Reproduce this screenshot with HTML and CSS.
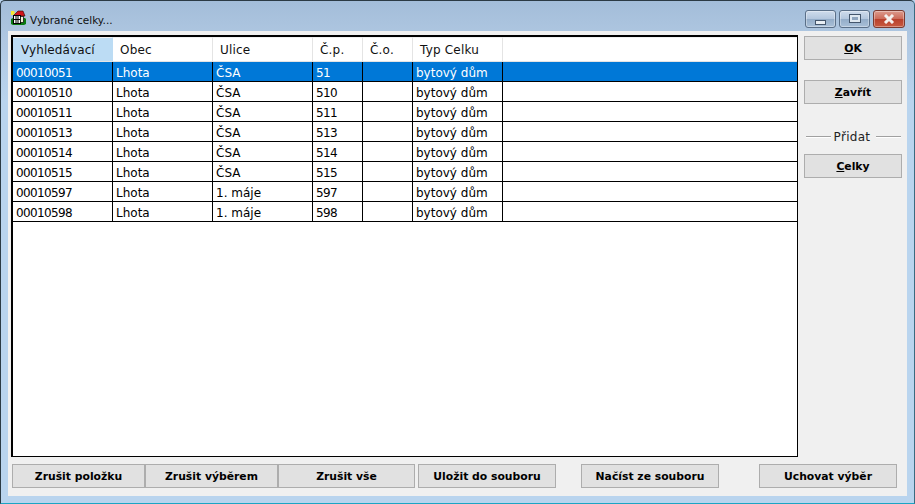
FILE: index.html
```html
<!DOCTYPE html>
<html lang="cs">
<head>
<meta charset="utf-8">
<title>Vybrané celky...</title>
<link rel="stylesheet" href="styles.css">
</head>
<body>
<div class="window">
  <div class="titlebar">
    <svg class="appicon" width="16" height="16" viewBox="0 0 16 16">
      <path d="M1 9l2-1h12l1 1v5l-2 1H3l-2-1z" fill="#0a7a12"/>
      <path d="M1 1h3l1 2-2 2H1z" fill="#f5e830"/>
      <path d="M3 6l5-5h5l2 5z" fill="#d0141c" stroke="#300" stroke-width=".6"/>
      <rect x="3.5" y="5.5" width="7" height="8" fill="#fff" stroke="#000"/>
      <path d="M6 6v7M8 6v7M4 9.5h6" stroke="#000"/>
      <rect x="10.5" y="6.5" width="3" height="6" fill="#f6eed8" stroke="#000" stroke-width=".7"/>
    </svg>
    <span class="title">Vybrané celky...</span>
    <div class="controls">
      <div class="ctl ctl-min"><span class="glyph-min"></span></div>
      <div class="ctl ctl-max"><span class="glyph-max"></span></div>
      <div class="ctl ctl-close">
        <svg width="14" height="10" viewBox="0 0 14 10"><path d="M3 1l8 8M11 1L3 9" stroke="#f4f0ee" stroke-width="3" fill="none"/></svg>
      </div>
    </div>
  </div>
  <div class="client">
    <div class="main">
      <div class="gridbox">
        <table class="grid">
          <colgroup>
            <col class="c1"><col class="c2"><col class="c3"><col class="c4"><col class="c5"><col class="c6"><col>
          </colgroup>
          <thead>
            <tr><th class="active">Vyhledávací</th><th>Obec</th><th>Ulice</th><th>Č.p.</th><th>Č.o.</th><th>Typ Celku</th><th></th></tr>
          </thead>
          <tbody>
            <tr class="sel"><td>00010051</td><td>Lhota</td><td>ČSA</td><td>51</td><td></td><td>bytový dům</td><td></td></tr>
            <tr><td>00010510</td><td>Lhota</td><td>ČSA</td><td>510</td><td></td><td>bytový dům</td><td></td></tr>
            <tr><td>00010511</td><td>Lhota</td><td>ČSA</td><td>511</td><td></td><td>bytový dům</td><td></td></tr>
            <tr><td>00010513</td><td>Lhota</td><td>ČSA</td><td>513</td><td></td><td>bytový dům</td><td></td></tr>
            <tr><td>00010514</td><td>Lhota</td><td>ČSA</td><td>514</td><td></td><td>bytový dům</td><td></td></tr>
            <tr><td>00010515</td><td>Lhota</td><td>ČSA</td><td>515</td><td></td><td>bytový dům</td><td></td></tr>
            <tr><td>00010597</td><td>Lhota</td><td>1. máje</td><td>597</td><td></td><td>bytový dům</td><td></td></tr>
            <tr><td>00010598</td><td>Lhota</td><td>1. máje</td><td>598</td><td></td><td>bytový dům</td><td></td></tr>
          </tbody>
        </table>
      </div>
      <div class="bottombar">
        <button class="btn b-a">Zrušit položku</button>
        <button class="btn b-a">Zrušit výběrem</button>
        <button class="btn b-b">Zrušit vše</button>
        <button class="btn b-c">Uložit do souboru</button>
        <button class="btn b-c">Načíst ze souboru</button>
        <button class="btn b-c">Uchovat výběr</button>
      </div>
    </div>
    <div class="side">
      <button class="btn side-btn"><u>O</u>K</button>
      <button class="btn side-btn"><u>Z</u>avřít</button>
      <div class="sep"><span>Přidat</span></div>
      <button class="btn side-btn"><u>C</u>elky</button>
    </div>
  </div>
</div>
</body>
</html>
```
FILE: styles.css
```css
* { box-sizing: border-box; }
html, body { margin: 0; padding: 0; background: #b9d4ee; }
body { width: 915px; height: 504px; overflow: hidden; font-family: "DejaVu Sans", sans-serif; font-size: 12px; color: #000; }
.window {
  width: 915px; height: 504px;
  display: flex; flex-direction: column;
  padding: 0 7px 7px 7px;
  border: 1px solid #2b3a44; border-bottom-color: #1ba5c4; border-right-color: #3a6a80;
  border-radius: 5px 5px 0 0;
  background: linear-gradient(180deg, #a3bdd9 0, #b0c8e2 40px, #b9d4ee 100px);
}
.titlebar { height: 30px; flex: none; display: flex; align-items: center; }
.appicon { margin-left: 2px; margin-top: 4px; flex: none; }
.title { margin-left: 4px; margin-top: 7px; font-size: 10.5px; color: #111; }
.controls { margin-left: auto; display: flex; gap: 3px; margin-right: 2px; margin-top: 6px; }
.ctl {
  height: 18px; width: 31px; display: flex; align-items: center; justify-content: center;
  border: 1px solid #5a6f88; border-radius: 3px;
  box-shadow: inset 0 0 0 1px rgba(255,255,255,.35);
  background: linear-gradient(180deg, #cfdcec 0, #b3c6dd 50%, #93acc8 51%, #a9c0d8 100%);
}
.ctl-close { width: 32px; border-color: #7a3a30; background: linear-gradient(180deg, #dc9a8c 0, #cc6a58 50%, #b8402c 51%, #c85a40 100%); }
.glyph-min { width: 11px; height: 5px; margin-top: 6px; background: #e8eef4; border: 1px solid #44566c; }
.glyph-max { width: 12px; height: 9px; margin-top: -1px; background: #8ea4bd; border: 1px solid #44566c; box-shadow: inset 0 0 0 2px #dfe8f0; }
.client { flex: 1; display: flex; background: #f0f0f0; padding: 4px 5px 8px 3px; min-height: 0; }
.main { flex: none; width: 787px; display: flex; flex-direction: column; }
.gridbox { height: 422px; flex: none; background: #fff; border: 1px solid #000; border-left-width: 2px; border-top-width: 2px; }
.grid { width: 784px; table-layout: fixed; border-collapse: separate; border-spacing: 0; }
.c1, .c2, .c3 { width: 100px; }
.c4, .c5 { width: 50px; }
.c6 { width: 90px; }
.grid th {
  height: 25px; padding: 0 0 0 7px; font-weight: 400; text-align: left; background: #fff; font-size: 12px;
  border-right: 1px solid #e4e4e4; border-bottom: 1px solid #e4e4e4; border-top: 1px solid #f0f0f0;
  letter-spacing: .2px; color: #111;
}
.grid th.active { background: #bcdcf4; border-right-color: #bcdcf4; padding-left: 8px; letter-spacing: .1px; }
.grid th:last-child { border-right: 0; }
.grid td {
  height: 20px; padding: 2px 0 0 3px; border-right: 1px solid #000; border-bottom: 1px solid #000;
  white-space: nowrap; overflow: hidden; font-size: 12px; line-height: 14px;
}
.grid td:first-child, .grid td:nth-child(4) { letter-spacing: -.63px; }
.grid td:last-child { border-right: 0; }
.grid tr.sel td { background: #0078d7; color: #fff; }
.bottombar { display: flex; margin-top: 7px; height: 24px; padding-left: 1px; flex: none; }
.btn {
  height: 24px; padding: 0; font: 700 10.8px "DejaVu Sans", sans-serif; color: #000; flex: none;
  background: #e1e1e1; border: 1px solid #adadad; border-radius: 0;
}
.b-a { width: 133px; }
.b-b { width: 137px; }
.b-c { width: 138px; margin-left: 3px; }
.b-c:nth-child(5) { margin-left: 25px; }
.b-c:nth-child(6) { margin-left: 40px; }
.side { flex: none; margin-left: 6px; margin-top: 1px; width: 98px; display: flex; flex-direction: column; }
.side-btn { width: 98px; padding-top: 1px; }
.side-btn + .side-btn { margin-top: 20px; }
.sep { height: 50px; padding: 15px 1px 0 2px; flex: none; display: flex; align-items: center; gap: 3px; color: #222; letter-spacing: .3px; font-size: 12px; }
.sep::before, .sep::after { content: ""; flex: 1; height: 2px; background: linear-gradient(180deg, #a0a0a0 50%, #fff 50%); }
.sep::after { margin-left: 3px; }
```
